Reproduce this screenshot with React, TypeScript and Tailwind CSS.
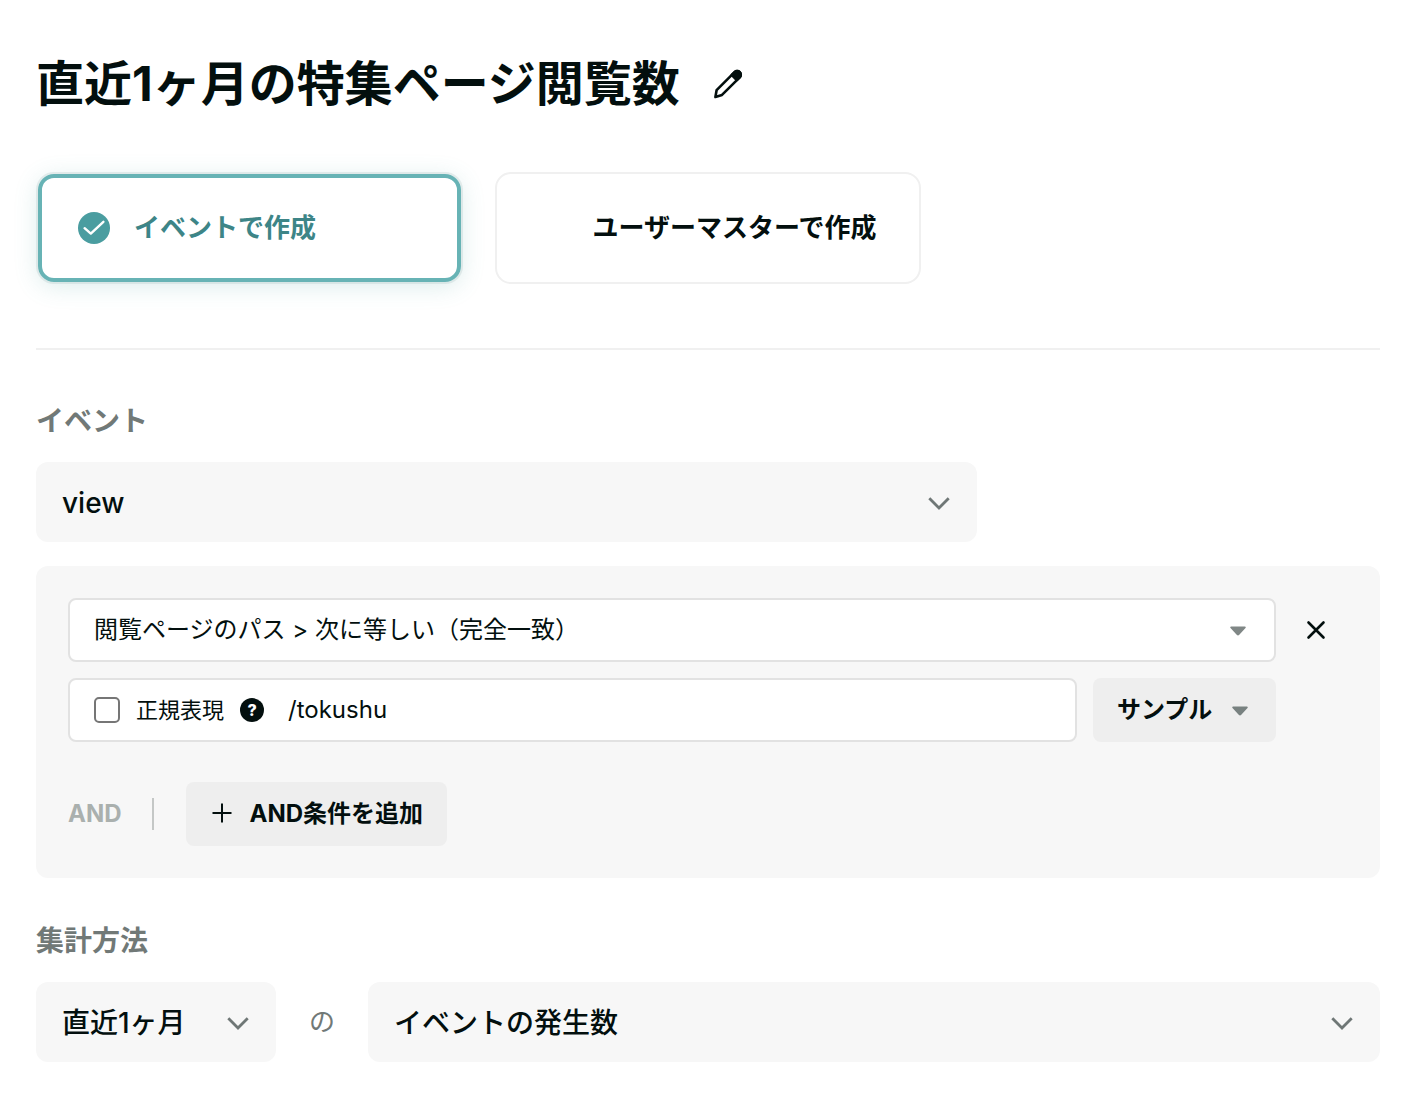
import React, { useState } from 'react';

function ChevronIcon() {
  return (
    <svg className="pointer-events-none absolute right-6 h-7 w-7 text-[#6f7776]" viewBox="0 0 28 28" fill="none" stroke="currentColor" strokeWidth="2.8" aria-hidden="true">
      <path d="M4.3 10.2 14 19.9l9.7-9.7" />
    </svg>
  );
}

function CaretIcon({ className }: { className: string }) {
  return (
    <svg className={className} viewBox="0 0 16 12" fill="currentColor" aria-hidden="true">
      <path d="M1.2 2.6h13.6c.9 0 1.3.9.7 1.5L9.3 10.8c-.8.8-1.8.8-2.6 0L.5 4.1C-.1 3.5.3 2.6 1.2 2.6Z" />
    </svg>
  );
}

function FilledSelect({ id, label, options, className }: { id: string; label: string; options: string[]; className: string }) {
  return (
    <div className={`relative flex items-center ${className}`}>
      <select
        id={id}
        aria-label={label}
        className="h-20 w-full appearance-none rounded-xl bg-[#f7f7f7] pt-0.5 pr-14 pl-[26px] text-[28px] leading-10 font-medium"
      >
        {options.map((o) => (
          <option key={o}>{o}</option>
        ))}
      </select>
      <ChevronIcon />
    </div>
  );
}

export default function App() {
  const [source, setSource] = useState('event');
  const [path, setPath] = useState('/tokushu');

  const cardBase = 'flex cursor-pointer items-center rounded-2xl text-[26px] leading-10 font-bold';
  const cardOn =
    'm-0.5 h-[108px] border-4 border-[#67b3b5] pl-9 text-[#3d8587] shadow-[0_0_0_2px_rgba(60,110,105,0.1),0_4px_24px_rgba(75,160,155,0.2)]';
  const cardOff = 'h-28 border-2 border-[#f0f0f0] pl-10';

  return (
    <main
      lang="ja"
      className="bg-white pt-[52px] pr-[38px] pb-10 pl-9 font-['Inter','Noto_Sans_CJK_JP',sans-serif] text-[#030f0e]"
    >
      <header className="flex items-center gap-8">
        <h1 className="text-5xl leading-16 font-bold">直近1ヶ月の特集ページ閲覧数</h1>
        <button type="button" aria-label="名前を編集">
          <svg className="h-8 w-8" viewBox="0 0 32 32" fill="none" stroke="currentColor" strokeWidth="2.6" strokeLinejoin="round" aria-hidden="true">
            <path d="M3.4 29 4.6 22.2 22.6 4.2a3.5 3.5 0 0 1 5.1 5.1L10 26.9Z" />
            <path d="M19.8 7 22.6 4.2a3.5 3.5 0 0 1 5.1 5.1L24.8 12Z" fill="currentColor" />
          </svg>
        </button>
      </header>

      <div role="radiogroup" aria-label="作成方法" className="mt-14 grid max-w-[885px] grid-cols-2 gap-8">
        {[
          { id: 'event', label: 'イベントで作成' },
          { id: 'user', label: 'ユーザーマスターで作成' },
        ].map(({ id, label }) => {
          const on = source === id;
          return (
            <label key={id} className={`${cardBase} ${on ? cardOn : cardOff}`}>
              <input type="radio" name="source" className="sr-only" checked={on} onChange={() => setSource(id)} />
              <span className="mr-6 flex h-8 w-8 shrink-0">
                {on && (
                  <svg viewBox="0 0 32 32" fill="none" aria-hidden="true">
                    <circle cx="16" cy="16" r="16" fill="#4a9da0" />
                    <path d="M6.6 16.2 12.8 21.6 25.4 9.8" stroke="#fff" strokeWidth="2.4" strokeLinecap="round" strokeLinejoin="round" />
                  </svg>
                )}
              </span>
              {label}
            </label>
          );
        })}
      </div>

      <hr className="mt-16 border-t-2 border-[#f0f0f0]" />

      <section>
        <h2 className="mt-[51px] text-[28px] leading-10 font-bold text-[#717977]">イベント</h2>
        <FilledSelect id="event" label="イベント" options={['view']} className="mt-[21px] w-7/10" />

        <div className="mt-6 rounded-xl bg-[#f7f7f7] p-8">
          <div className="flex items-start gap-2">
            <div className="flex min-w-0 flex-1 flex-col gap-4">
              <div className="relative flex items-center">
                <select
                  aria-label="条件"
                  className="h-16 w-full appearance-none rounded-lg border-2 border-[#e2e2e2] bg-white pr-14 pl-6 text-2xl"
                >
                  <option>閲覧ページのパス &gt; 次に等しい（完全一致）</option>
                </select>
                <CaretIcon className="pointer-events-none absolute right-[30px] h-3 w-4 text-[#808786]" />
              </div>
              <div className="flex gap-4">
                <div className="flex h-16 min-w-0 flex-1 items-center rounded-lg border-2 border-[#e2e2e2] bg-white px-6">
                  <label className="flex items-center gap-4 text-[22px] leading-8">
                    <input
                      type="checkbox"
                      className="h-[26px] w-[26px] appearance-none rounded-[5px] border-2 border-[#767676] bg-white checked:bg-[#4a9da0]"
                    />
                    正規表現
                  </label>
                  <button
                    type="button"
                    aria-label="正規表現のヘルプ"
                    className="ml-4 h-6 w-6 shrink-0 rounded-full bg-[#030f0e] text-center text-base leading-6 font-extrabold text-white"
                  >
                    ?
                  </button>
                  <input
                    type="text"
                    aria-label="値"
                    value={path}
                    onChange={(e) => setPath(e.target.value)}
                    className="ml-6 h-full min-w-0 flex-1 pb-0.5 text-2xl outline-none"
                  />
                </div>
                <button type="button" className="flex h-16 w-[183px] items-center justify-between rounded-lg bg-[#eeeeee] pr-7 pl-6 text-2xl font-bold">
                  サンプル
                  <CaretIcon className="h-3 w-4 text-[#788180]" />
                </button>
              </div>
            </div>
            <button type="button" aria-label="条件を削除" className="flex h-16 w-16 items-center justify-center">
              <svg className="h-5 w-5" viewBox="0 0 20 20" fill="none" stroke="currentColor" strokeWidth="2.6" strokeLinecap="round" aria-hidden="true">
                <path d="m2.5 2.5 15 15m0-15-15 15" />
              </svg>
            </button>
          </div>

          <div className="mt-10 flex items-center">
            <span className="text-2xl font-bold text-[#aab0ae]">AND</span>
            <span className="mr-8 ml-[30px] h-8 w-0.5 bg-[#c4c7c6]" />
            <button type="button" className="flex h-16 items-center gap-4 rounded-lg bg-[#eeeeee] px-6 text-2xl font-bold">
              <svg className="h-6 w-6" viewBox="0 0 24 24" fill="none" stroke="currentColor" strokeWidth="2" aria-hidden="true">
                <path d="M12 1.5v19M2.5 11h19" />
              </svg>
              AND条件を追加
            </button>
          </div>
        </div>
      </section>

      <section>
        <h2 className="mt-[43px] text-[28px] leading-10 font-bold text-[#717977]">集計方法</h2>
        <div className="mt-[21px] flex items-center">
          <FilledSelect id="period" label="期間" options={['直近1ヶ月']} className="w-60 shrink-0" />
          <span className="mx-[33px] text-[26px] leading-10 text-[#717977]">の</span>
          <FilledSelect id="metric" label="集計対象" options={['イベントの発生数']} className="min-w-0 flex-1" />
        </div>
      </section>
    </main>
  );
}
